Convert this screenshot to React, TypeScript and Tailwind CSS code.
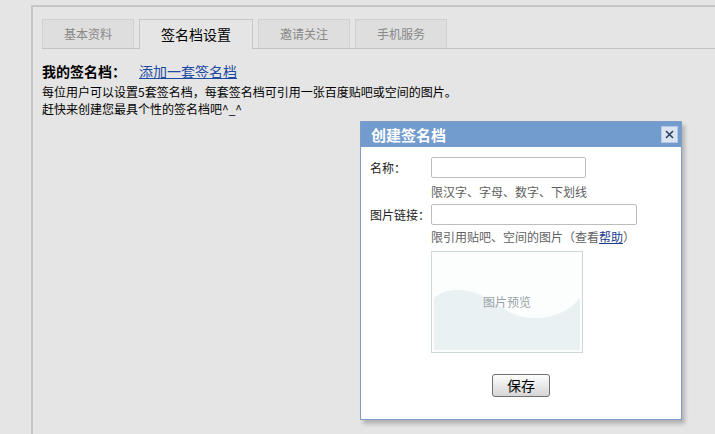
const tabs = [
  { label: "基本资料", active: false, width: "w-[92px]" },
  { label: "签名档设置", active: true, width: "w-[114px]" },
  { label: "邀请关注", active: false, width: "w-[92px]" },
  { label: "手机服务", active: false, width: "w-[92px]" },
];

const CloseIcon = () => (
  <svg className="h-[9px] w-[9px]" viewBox="0 0 9 9" fill="none">
    <path d="M1 1L8 8M8 1L1 8" stroke="#2d3f5f" strokeWidth="1.6" />
  </svg>
);

const PreviewWave = () => (
  <svg className="absolute inset-[2px] h-[96px] w-[146px]" viewBox="0 0 146 96" preserveAspectRatio="none">
    <path
      d="M0 44 C10 36 22 34 38 38 C62 44 72 64 100 64 C122 64 136 56 146 44 L146 96 L0 96 Z"
      fill="#e9f1f3"
    />
  </svg>
);

const SignatureDialog = () => (
  <div className="absolute left-[360px] top-[121px] w-[322px] border border-[#7f9dc4] bg-white shadow-[3px_4px_4px_rgba(0,0,0,0.22)]">
    <div className="flex h-[25px] items-center justify-between bg-[#739cce] pl-[10px] pr-[3px]">
      <span className="text-[15px] font-bold leading-none text-white">创建签名档</span>
      <button
        className="flex h-[17px] w-[17px] items-center justify-center border border-[#b5c8e2] bg-[#dbe5f2]"
        type="button"
      >
        <CloseIcon />
      </button>
    </div>

    <div className="grid grid-cols-[61px_1fr] pl-[9px] pt-[10px] text-[12px] text-[#222]">
      <span className="flex h-[21px] items-center">名称：</span>
      <div>
        <div className="h-[21px] w-[155px] rounded-[2px] border border-[#bdbdbd] bg-white" />
        <p className="mt-[5px] leading-[17px] text-[#5f5f5f]">限汉字、字母、数字、下划线</p>
      </div>

      <span className="mt-[4px] flex h-[21px] items-center">图片链接：</span>
      <div className="mt-[4px]">
        <div className="h-[21px] w-[206px] rounded-[2px] border border-[#bdbdbd] bg-white" />
        <p className="mt-[3px] leading-[17px] text-[#5f5f5f]">
          限引用贴吧、空间的图片（查看<a className="text-[#1a3d8f] underline">帮助</a>）
        </p>
        <div className="relative mt-[6px] flex h-[102px] w-[152px] items-center justify-center border border-[#cdd7da] bg-[#fcfdfd]">
          <PreviewWave />
          <span className="relative text-[12px] text-[#9aa4a8]">图片预览</span>
        </div>
      </div>
    </div>

    <div className="flex justify-center pb-[22px] pt-[21px]">
      <button
        className="flex h-[23px] w-[58px] items-center justify-center rounded-[3px] border border-[#707070] bg-gradient-to-b from-[#fdfdfd] to-[#d6d6d6] text-[14px] text-black"
        type="button"
      >
        保存
      </button>
    </div>
  </div>
);

export default function App() {
  return (
    <div
      className="relative h-[434px] w-full overflow-hidden bg-[#e5e5e5] pl-[31px] pt-[5px]"
      style={{ fontFamily: '"Noto Sans CJK SC", "Noto Sans", sans-serif' }}
    >
      <div className="h-full border-l-2 border-t-2 border-[#c6c6c6] pl-[9px]">
        <div className="mt-[12px] flex h-[30px] items-end gap-[5px] border-b border-[#c4c4c4]">
          {tabs.map((tab) =>
            tab.active ? (
              <div
                key={tab.label}
                className={`${tab.width} -mb-px flex h-[30px] items-center justify-center border border-b-0 border-[#c6c6c6] bg-[#e5e5e5] text-[14px] text-black`}
              >
                {tab.label}
              </div>
            ) : (
              <div
                key={tab.label}
                className={`${tab.width} flex h-[29px] items-center justify-center border border-b-0 border-[#cfcfcf] bg-[#dedede] text-[12px] text-[#888]`}
              >
                {tab.label}
              </div>
            ),
          )}
        </div>

        <div className="mt-[13px] flex items-center leading-[18px]">
          <span className="text-[14px] font-bold text-black">我的签名档：</span>
          <a className="ml-[13px] text-[14px] text-[#1d4ba0] underline">添加一套签名档</a>
        </div>
        <p className="mt-[3px] text-[12px] leading-[17px] text-black">
          每位用户可以设置5套签名档，每套签名档可引用一张百度贴吧或空间的图片。
        </p>
        <p className="text-[12px] leading-[17px] text-black">赶快来创建您最具个性的签名档吧^_^</p>
      </div>

      <SignatureDialog />
    </div>
  );
}
